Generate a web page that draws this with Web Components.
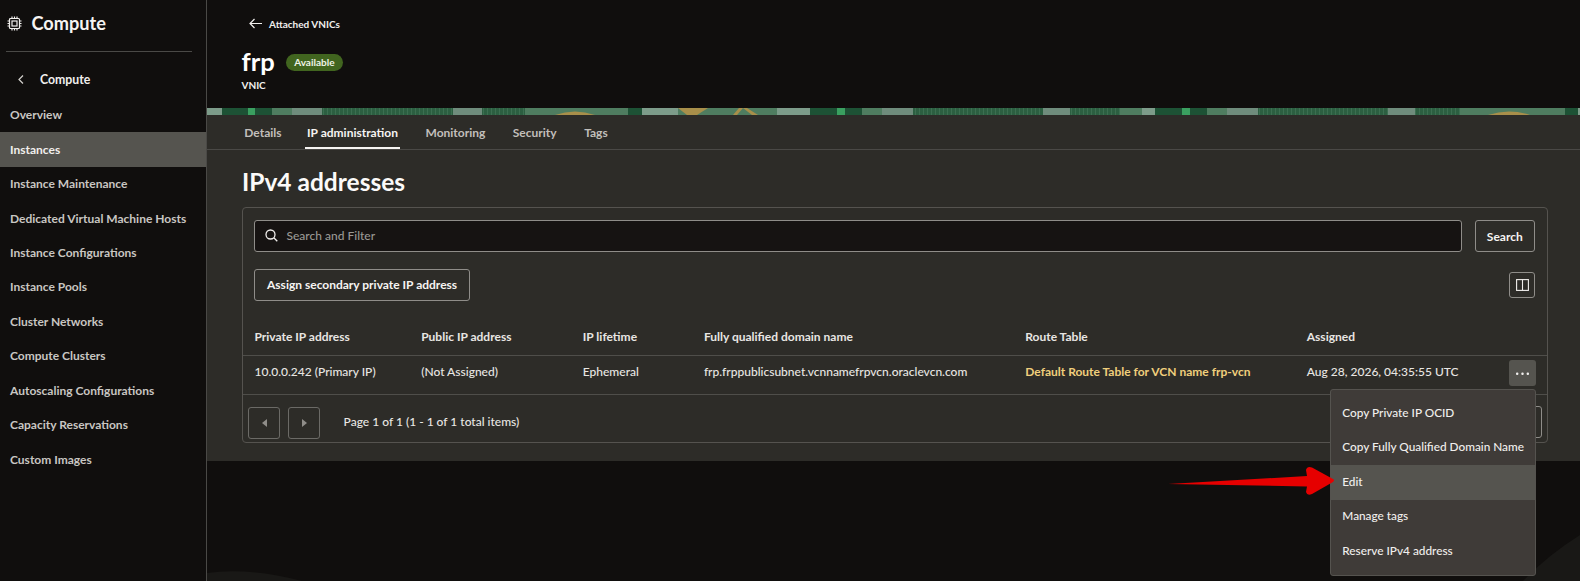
<!DOCTYPE html>
<html>
<head>
<meta charset="utf-8">
<style>
  html, body { margin: 0; height: 100%; background: #100e0d; overflow: hidden; }
  body { font-family: Lato, "Noto Sans", sans-serif; color: #f1efed; }
  oci-app { width: 1580px; height: 581px; }
</style>
</head>
<body>
<oci-app></oci-app>
<script>
const ICONS = {
  chip: '<svg width="15" height="15" viewBox="0 0 15 15" fill="none" stroke="#f1efed" stroke-width="1.2"><rect x="2.500" y="2.500" width="10" height="10" rx="1"/><rect x="5" y="5" width="5" height="5"/><path d="M5 .5v2M7.500 .5v2M10 .5v2M5 12.500v2M7.500 12.500v2M10 12.500v2M.5 5h2M.5 7.500h2M.5 10h2M12.500 5h2M12.500 7.500h2M12.500 10h2"/></svg>',
  back: '<svg width="13" height="11" viewBox="0 0 13 11" fill="none" stroke="#f1efed" stroke-width="1.2"><path d="M13 5.500H1M5.500 1L1 5.500 5.500 10"/></svg>',
  chevron: '<svg width="6" height="9" viewBox="0 0 6 9" fill="none" stroke="#d4d1cd" stroke-width="1.2"><path d="M5 .5L1 4.500 5 8.500"/></svg>',
  search: '<svg width="13" height="13" viewBox="0 0 13 13" fill="none" stroke="#f1efed" stroke-width="1.3"><circle cx="5.500" cy="5.500" r="4.500"/><path d="M8.800 8.800L12.300 12.300"/></svg>',
  columns: '<svg width="13" height="12" viewBox="0 0 13 12" fill="none" stroke="#f1efed" stroke-width="1.1"><rect x=".6" y=".6" width="11.800" height="10.800"/><path d="M6.500 .6v10.800"/></svg>',
  dots: '<svg width="13" height="3" viewBox="0 0 13 3" fill="#f1efed"><rect x="0" y=".5" width="2.400" height="2.400" rx="1"/><rect x="5.300" y=".5" width="2.400" height="2.400" rx="1"/><rect x="10.600" y=".5" width="2.400" height="2.400" rx="1"/></svg>'
};

class OciNavItem extends HTMLElement {
  constructor() {
    super();
    this.attachShadow({mode: "open"}).innerHTML = `
      <style>
        :host { display: flex; align-items: center; height: 34.450px; box-sizing: border-box; padding: 0 0 1px 10px;
          font-size: 12px; font-weight: 700; color: #c9c6c2; }
        :host([active]) { background: #55544f; color: #f1efed; }
      </style>
      <slot></slot>`;
  }
}
customElements.define("oci-nav-item", OciNavItem);

class OciSidebar extends HTMLElement {
  constructor() {
    super();
    this.attachShadow({mode: "open"}).innerHTML = `
      <style>
        :host { display: block; width: 207px; flex: none; box-sizing: border-box;
          border-right: 1px solid #4a4946; background: #100e0d; }
        .head { display: flex; align-items: center; gap: 9.500px; height: 52px; width: 186px; margin-left: 6px; padding: 0 0 5px 1px;
          border-bottom: 1px solid #4a4946; font-size: 18.200px; font-weight: 700; color: #f6f4f2; box-sizing: border-box; }
        .head svg { display: block; }
        .up { display: flex; align-items: center; gap: 16px; height: 28px; margin-top: 14px; padding: 0 0 1px 18px; box-sizing: border-box;
          font-size: 12.300px; font-weight: 700; color: #f1efed; }
        nav { margin-top: 4px; }
      </style>
      <div class="head">${ICONS.chip}<span>Compute</span></div>
      <div class="up">${ICONS.chevron}<span>Compute</span></div>
      <nav><slot></slot></nav>`;
  }
}
customElements.define("oci-sidebar", OciSidebar);

class OciBanner extends HTMLElement {
  constructor() {
    super();
    // strip of the leaf artwork behind the header, x is from the left of main
    const MID = "#4f7d60", GRAY = "#7d9c8a", DARK = "#1d5235", LIME = "#3aa060", STRIPE = "url(#st)", TEX = "#6f8c7c";
    const bits = [
      [0,15,GRAY],[15,26,DARK],[41,7,LIME],[48,17,DARK],[65,20,MID],[85,30,TEX],[115,131,STRIPE],[246,29,TEX],[275,43,STRIPE],
      [318,103,MID],[421,14,DARK],[435,36,GRAY],[471,99,MID],[570,33,GRAY],[603,27,DARK],[630,8,LIME],
      [638,17,DARK],[655,20,MID],[675,31,TEX],[706,130,STRIPE],[836,27,TEX],[863,50,STRIPE],[913,22,MID],[935,13,GRAY],
      [948,27,DARK],[975,8,LIME],[983,17,DARK],[1000,20,MID],[1020,31,TEX],
      [1051,130,STRIPE],[1181,27,TEX],[1208,45,STRIPE],[1253,105,MID],[1358,13,DARK],[1371,2,GRAY]
    ].map(b => `<rect x="${b[0]}" y="0" width="${b[1]}" height="7" fill="${b[2]}"/>`).join("");
    const GOLD = "#a88f4a";
    const gold = [
      "M348 7Q368 0 388 7Z", "M471 0H501L490 7H480Z", "M526 7L532 0H536L530 7Z", "M536 0H540L551 7H545Z", "M1281 7Q1302 0 1323 7Z"
    ].map(d => `<path d="${d}" fill="${GOLD}"/>`).join("");
    this.attachShadow({mode: "open"}).innerHTML = `
      <style>:host { display: block; height: 7px; } svg { display: block; }</style>
      <svg width="1373" height="7" viewBox="0 0 1373 7">
        <defs><pattern id="st" width="4" height="7" patternUnits="userSpaceOnUse"><rect width="4" height="7" fill="#2c5f41"/><rect width="1" height="7" fill="#3c6f51"/></pattern></defs>
        ${bits}${gold}
      </svg>`;
  }
}
customElements.define("oci-banner", OciBanner);

class OciHeader extends HTMLElement {
  constructor() {
    super();
    this.attachShadow({mode: "open"}).innerHTML = `
      <style>
        :host { display: block; height: 108px; box-sizing: border-box; padding: 17px 0 0 34.500px; background: #100e0d; }
        .back { display: flex; align-items: center; gap: 7.500px; height: 13px; padding-left: 7px; font-size: 10px; font-weight: 700; }
        .title { display: flex; align-items: center; gap: 11px; margin-top: 18px; height: 28px; }
        h1 { margin: 0 0 3px; font-size: 25.500px; font-weight: 700; line-height: 28px; color: #fff; }
        .badge { background: #41651f; color: #eef2e6; font-size: 10px; font-weight: 700; border-radius: 9px;
          height: 17px; line-height: 17px; padding: 0 8.500px; }
        .sub { font-size: 10px; font-weight: 700; line-height: 12px; margin-top: 3px; }
      </style>
      <div class="back">${ICONS.back}<span>Attached VNICs</span></div>
      <div class="title"><h1>frp</h1><span class="badge">Available</span></div>
      <div class="sub">VNIC</div>`;
  }
}
customElements.define("oci-header", OciHeader);

class OciTabs extends HTMLElement {
  constructor() {
    super();
    const tabs = [["Details",0],["IP administration",1],["Monitoring",0],["Security",0],["Tags",0]];
    this.attachShadow({mode: "open"}).innerHTML = `
      <style>
        :host { display: flex; gap: 23.500px; height: 35px; box-sizing: border-box; padding-left: 35.300px;
          border-bottom: 1px solid #4a4946; background: #2d2c28; }
        span { display: flex; align-items: center; padding: 2px 2px 0; height: 34px; box-sizing: border-box;
          font-size: 12px; font-weight: 700; color: #c2bfbb; border-bottom: 2px solid transparent; }
        span.on { color: #f6f4f2; border-bottom-color: #f6f4f2; margin-left: -2px; }
      </style>
      ${tabs.map(t => `<span class="${t[1] ? "on" : ""}">${t[0]}</span>`).join("")}`;
  }
}
customElements.define("oci-tabs", OciTabs);

class OciButton extends HTMLElement {
  constructor() {
    super();
    this.attachShadow({mode: "open"}).innerHTML = `
      <style>
        :host { display: inline-flex; align-items: center; justify-content: center; box-sizing: border-box; height: 31.500px; padding: 0 12px 1px;
          border: 1px solid #8f8d89; border-radius: 3px; font-size: 12px; font-weight: 700; color: #f6f4f2; }
      </style>
      <slot></slot>`;
  }
}
customElements.define("oci-button", OciButton);

class OciTable extends HTMLElement {
  constructor() {
    super();
    const cols = "grid-template-columns: 166.700px 161.600px 121.100px 321.400px 281.500px 1fr;";
    this.attachShadow({mode: "open"}).innerHTML = `
      <style>
        :host { display: block; font-size: 12px; }
        .row { display: grid; ${cols} padding-left: 11.500px; align-items: center; box-sizing: border-box; }
        .head { height: 37px; padding-bottom: 2px; font-weight: 700; color: #e8e6e3; border-bottom: 1px solid #4f4e4a; }
        .data { height: 39px; padding-bottom: 7px; font-weight: 500; color: #e8e6e3; border-bottom: 1px solid #4f4e4a; position: relative; }
        .link { color: #f0cf7c; font-weight: 700; }
        .more { position: absolute; left: 1266px; top: 4px; width: 26.700px; height: 25.700px; border-radius: 3px; background: #55544f;
          display: flex; align-items: center; justify-content: center; }
      </style>
      <div class="row head"><span>Private IP address</span><span>Public IP address</span><span>IP lifetime</span><span>Fully qualified domain name</span><span>Route Table</span><span>Assigned</span></div>
      <div class="row data"><span>10.0.0.242 (Primary IP)</span><span>(Not Assigned)</span><span>Ephemeral</span><span>frp.frppublicsubnet.vcnnamefrpvcn.oraclevcn.com</span><span class="link">Default Route Table for VCN name frp-vcn</span><span>Aug 28, 2026, 04:35:55 UTC</span>
        <div class="more">${ICONS.dots}</div></div>`;
  }
}
customElements.define("oci-table", OciTable);

class OciPager extends HTMLElement {
  constructor() {
    super();
    this.attachShadow({mode: "open"}).innerHTML = `
      <style>
        :host { display: flex; align-items: center; gap: 8.300px; height: 49.200px; padding: 5.500px 0 0 5px; box-sizing: border-box; font-size: 12px; font-weight: 500; color: #e8e6e3; position: relative; }
        .b { width: 32px; height: 32px; box-sizing: border-box; border: 1px solid #6b6a66; border-radius: 3px; display: flex; align-items: center; justify-content: center; }
        .l { width: 0; height: 0; border: 4px solid transparent; border-left: 0; border-right: 5px solid #8f8d89; }
        .r { width: 0; height: 0; border: 4px solid transparent; border-right: 0; border-left: 5px solid #8f8d89; }
        .t { margin-left: 15px; padding-bottom: 3px; }
        .edge { position: absolute; right: 5px; top: 11px; width: 20px; height: 32px; box-sizing: border-box; border: 1px solid #8f8d89; border-radius: 3px; }
      </style>
      <div class="b"><i class="l"></i></div><div class="b"><i class="r"></i></div><span class="t">Page 1 of 1 (1 - 1 of 1 total items)</span><div class="edge"></div>`;
  }
}
customElements.define("oci-pager", OciPager);

class OciMenu extends HTMLElement {
  constructor() {
    super();
    const items = ["Copy Private IP OCID","Copy Fully Qualified Domain Name","Edit","Manage tags","Reserve IPv4 address"];
    this.attachShadow({mode: "open"}).innerHTML = `
      <style>
        :host { position: absolute; left: 1330.300px; top: 389.300px; width: 205.400px; box-sizing: border-box; padding: 6px 0; background: #3f3b38;
          border: 1px solid #55534f; border-radius: 3px; font-size: 11.800px; font-weight: 500; color: #f1efed; white-space: nowrap; }
        div { height: 34.500px; box-sizing: border-box; display: flex; align-items: center; padding: 0 0 3px 11px; }
        .hi { background: #55544f; padding-bottom: 2px; }
      </style>
      ${items.map(t => `<div class="${t === "Edit" ? "hi" : ""}">${t}</div>`).join("")}`;
  }
}
customElements.define("oci-menu", OciMenu);

class OciApp extends HTMLElement {
  constructor() {
    super();
    const nav = ["Overview","Instances","Instance Maintenance","Dedicated Virtual Machine Hosts","Instance Configurations","Instance Pools","Cluster Networks","Compute Clusters","Autoscaling Configurations","Capacity Reservations","Custom Images"];
    this.attachShadow({mode: "open"}).innerHTML = `
      <style>
        :host { display: flex; position: relative; overflow: hidden; background: #100e0d; }
        main { flex: 1; min-width: 0; }
        .panel { background: #2d2c28; height: 310.700px; box-sizing: border-box; padding: 18px 32.500px 0 35px; }
        h2 { margin: 0; font-size: 24.500px; line-height: 28px; font-weight: 700; color: #fbfaf9; }
        .card { margin-top: 11.300px; border: 1px solid #55534f; border-radius: 4px; height: 236px; box-sizing: border-box; }
        .search { display: flex; gap: 12.600px; padding: 12px 11.500px 0 11px; }
        .search oci-button { width: 60.400px; padding: 0; }
        .input { flex: 1; height: 31.700px; box-sizing: border-box; border: 1px solid #8f8d89; border-radius: 3px; background: #161312;
          display: flex; align-items: center; gap: 9px; padding: 0 0 1px 9.500px; font-size: 12px; font-weight: 500; color: #9a9894; }
        .tools { display: flex; justify-content: space-between; align-items: center; padding: 17.500px 11.500px 0 11px; }
        .icon { width: 26px; height: 26px; box-sizing: border-box; border: 1px solid #8f8d89; border-radius: 3px; display: flex; align-items: center; justify-content: center; }
        oci-table { margin-top: 18.300px; }
        .arrow { position: absolute; left: 1168px; top: 466px; }
        .curve { position: absolute; left: 207px; top: 570px; }
        .curve2 { position: absolute; left: 1523px; top: 530px; }
      </style>
      <oci-sidebar>${nav.map(n => `<oci-nav-item${n === "Instances" ? " active" : ""}>${n}</oci-nav-item>`).join("")}</oci-sidebar>
      <main>
        <oci-header></oci-header>
        <oci-banner></oci-banner>
        <oci-tabs></oci-tabs>
        <section class="panel">
          <h2>IPv4 addresses</h2>
          <div class="card">
            <div class="search">
              <div class="input">${ICONS.search}<span>Search and Filter</span></div>
              <oci-button>Search</oci-button>
            </div>
            <div class="tools">
              <oci-button>Assign secondary private IP address</oci-button>
              <div class="icon">${ICONS.columns}</div>
            </div>
            <oci-table></oci-table>
            <oci-pager></oci-pager>
          </div>
        </section>
      </main>
      <svg class="curve" width="95" height="11" viewBox="0 0 95 11"><path d="M0 3Q40 -3 95 11H0Z" fill="#191816"/></svg>
      <svg class="curve2" width="57" height="51" viewBox="0 0 57 51"><path d="M0 51Q25 25 57 5V51Z" fill="#191816"/></svg>
      <oci-menu></oci-menu>
      <svg class="arrow" width="168" height="30" viewBox="0 0 168 30"><path d="M0 18L139 10L138 4Q139 0 144 1.500L165 13Q167 14 165 16L144 28Q139 30 138 26L139 20.500Z" fill="#e60000"/></svg>`;
  }
}
customElements.define("oci-app", OciApp);
</script>
</body>
</html>
